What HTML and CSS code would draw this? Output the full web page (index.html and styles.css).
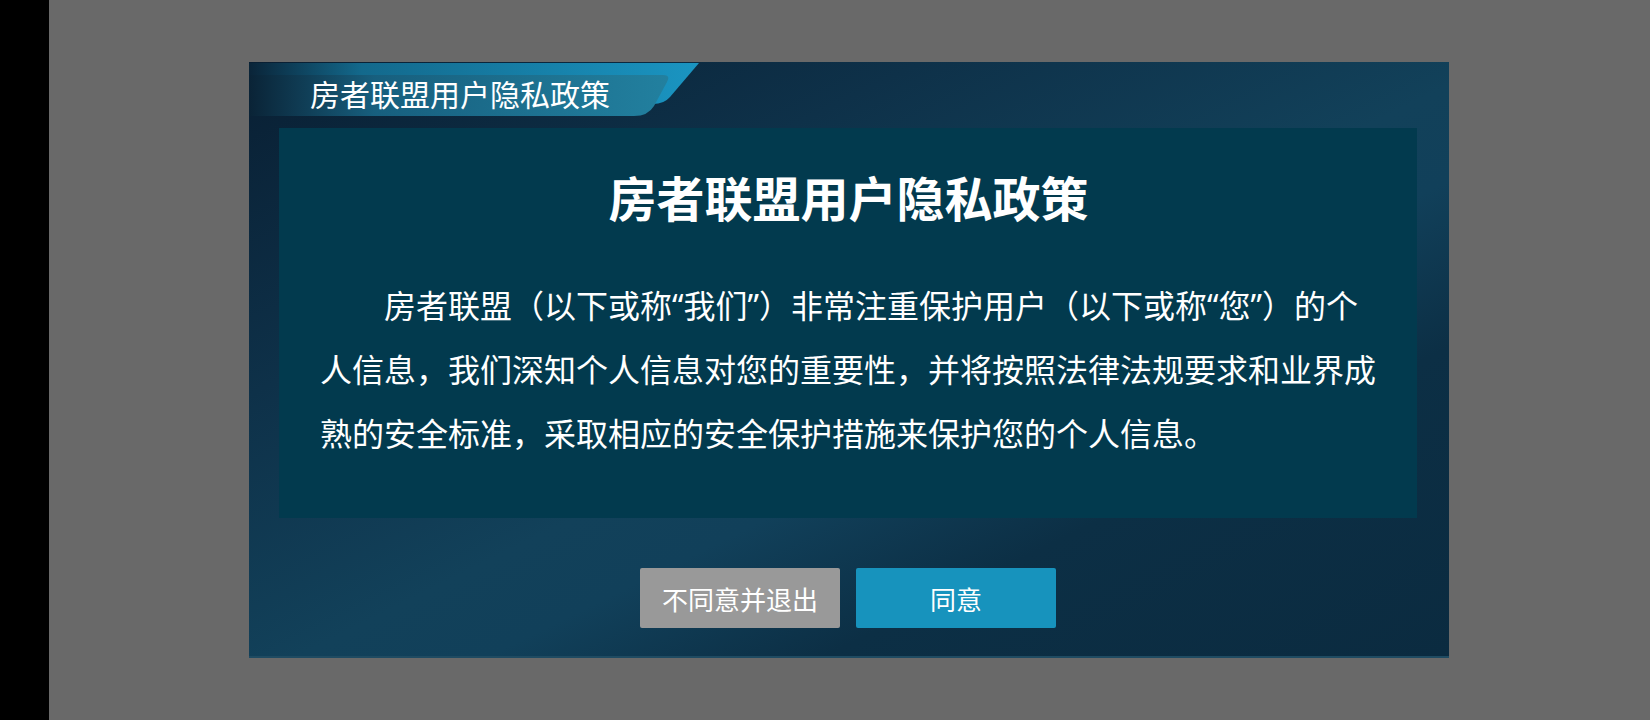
FILE: index.html
```html
<!DOCTYPE html>
<html lang="zh-CN">
<head>
<meta charset="utf-8">
<title>房者联盟用户隐私政策</title>
<link rel="stylesheet" href="styles.css">
</head>
<body>
<div class="side"></div>
<main class="stage">
  <section class="dialog">
    <header class="tab">
      <svg class="tab-bg" width="452" height="54" viewBox="0 0 452 54" aria-hidden="true">
        <defs>
          <linearGradient id="gBack" x1="0" y1="0" x2="1" y2="0">
            <stop offset="0" stop-color="#0a2438"/>
            <stop offset="0.25" stop-color="#13698c"/>
            <stop offset="1" stop-color="#1a95c2"/>
          </linearGradient>
          <linearGradient id="gFront" x1="0" y1="0" x2="1" y2="0">
            <stop offset="0" stop-color="#0a2336"/>
            <stop offset="0.3" stop-color="#175f7e"/>
            <stop offset="1" stop-color="#22809f"/>
          </linearGradient>
        </defs>
        <path d="M0,1 H450 L421,35 Q415,42 404,42 H0 Z" fill="url(#gBack)"/>
        <path d="M0,13 H414 Q422,13 418,20 L405,44 Q399,54 385,54 H0 Z" fill="url(#gFront)"/>
      </svg>
      <span class="tab-title">房者联盟用户隐私政策</span>
    </header>
    <div class="panel">
      <h1 class="title">房者联盟用户隐私政策</h1>
      <p class="text">房者联盟（以下或称“我们”）非常注重保护用户（以下或称“您”）的个人信息，我们深知个人信息对您的重要性，并将按照法律法规要求和业界成熟的安全标准，采取相应的安全保护措施来保护您的个人信息。</p>
    </div>
    <div class="actions">
      <button class="btn btn-gray" type="button">不同意并退出</button>
      <button class="btn btn-blue" type="button">同意</button>
    </div>
  </section>
</main>
</body>
</html>
```

FILE: styles.css
```css
html, body {
  margin: 0;
  padding: 0;
  height: 100%;
}

body {
  display: flex;
  background: #696969;
  font-family: "Noto Sans CJK SC", "Noto Sans", sans-serif;
  color: #ffffff;
  overflow: hidden;
}

.side {
  width: 49px;
  flex: 0 0 49px;
  background: #000000;
}

.stage {
  flex: 1;
  display: flex;
  align-items: flex-start;
  justify-content: flex-start;
  padding: 62px 0 0 200px;
}

.dialog {
  width: 1200px;
  height: 596px;
  box-sizing: border-box;
  display: flex;
  flex-direction: column;
  background: linear-gradient(to bottom right,
    #091f33 0%,
    #0e3149 28%,
    #12415a 52%,
    #11405a 60%,
    #0c2f45 74%,
    #0b2b40 100%);
  border-bottom: 2px solid #1f4b62;
  padding-bottom: 28px;
}

.tab {
  position: relative;
  width: 452px;
  height: 54px;
  flex: 0 0 54px;
}

.tab-bg {
  position: absolute;
  left: 0;
  top: 0;
  display: block;
}

.tab-title {
  position: relative;
  display: block;
  padding: 11px 0 0 61px;
  font-size: 30px;
  line-height: 41px;
  white-space: nowrap;
}

.panel {
  margin: 12px 32px 0 30px;
  height: 390px;
  box-sizing: border-box;
  padding: 32px 40px 0 41px;
  background: #023a4e;
}

.title {
  margin: 0 0 42px;
  font-size: 48px;
  line-height: 72px;
  font-weight: 700;
  text-align: center;
}

.text {
  margin: 0;
  font-family: "Noto Sans", "Noto Sans CJK SC", sans-serif;
  font-size: 32px;
  line-height: 64px;
  text-indent: 2em;
}

.actions {
  margin-top: 50px;
  display: flex;
  justify-content: center;
  gap: 16px;
  padding-right: 2px;
}

.btn {
  width: 200px;
  height: 60px;
  border: none;
  border-radius: 2px;
  color: #ffffff;
  font-family: "Noto Sans CJK SC", sans-serif;
  font-size: 26px;
  padding: 0;
  cursor: pointer;
}

.btn-gray {
  background: #999999;
}

.btn-blue {
  background: #1793bd;
}
```
